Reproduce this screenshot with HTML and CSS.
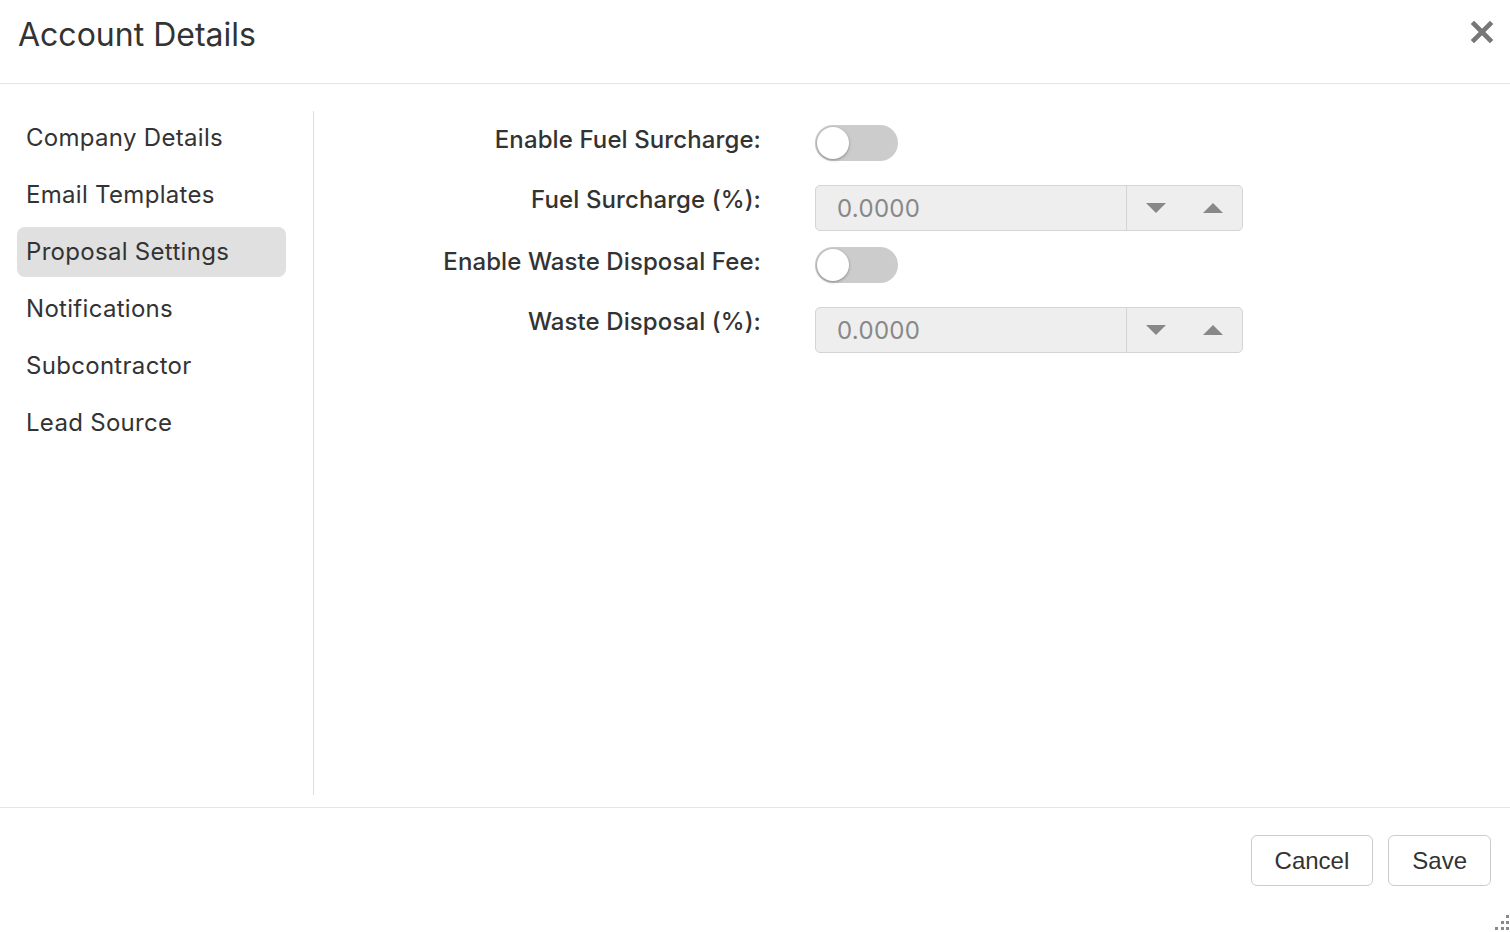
FILE: index.html
```html
<!DOCTYPE html>
<html>
<head>
    <title>Account Details</title>
    <link rel="stylesheet" href="styles.css">
</head>
<body>
    <div class="modal">
        <div class="modal-header">
            <h1>Account Details</h1>
            <button class="close-btn" title="Close">
                <svg width="24" height="24" viewBox="0 0 24 24">
                    <path d="M4 4 L20 20 M20 4 L4 20" stroke="#777" stroke-width="4.6" stroke-linecap="square" fill="none"/>
                </svg>
            </button>
        </div>

        <div class="modal-body">
            <ul class="side-nav">
                <li>Company Details</li>
                <li>Email Templates</li>
                <li class="active">Proposal Settings</li>
                <li>Notifications</li>
                <li>Subcontractor</li>
                <li>Lead Source</li>
            </ul>

            <div class="settings">
                <div class="field field-toggle">
                    <label>Enable Fuel Surcharge:</label>
                    <span class="switch"><span class="knob"></span></span>
                </div>
                <div class="field">
                    <label>Fuel Surcharge (%):</label>
                    <div class="spinner">
                        <input type="text" value="0.0000" disabled>
                        <button class="spin"><span class="arrow-down"></span></button>
                        <button class="spin"><span class="arrow-up"></span></button>
                    </div>
                </div>
                <div class="field field-toggle">
                    <label>Enable Waste Disposal Fee:</label>
                    <span class="switch"><span class="knob"></span></span>
                </div>
                <div class="field">
                    <label>Waste Disposal (%):</label>
                    <div class="spinner">
                        <input type="text" value="0.0000" disabled>
                        <button class="spin"><span class="arrow-down"></span></button>
                        <button class="spin"><span class="arrow-up"></span></button>
                    </div>
                </div>
            </div>
        </div>

        <div class="modal-footer">
            <button class="btn">Cancel</button>
            <button class="btn">Save</button>
            <svg class="grip" width="17" height="17" viewBox="0 0 17 17">
                <g fill="#8a8a8a">
                    <rect x="13" y="1" width="3" height="3"/>
                    <rect x="8" y="7" width="3" height="3"/>
                    <rect x="13" y="7" width="3" height="3"/>
                    <rect x="2" y="13" width="3" height="3"/>
                    <rect x="8" y="13" width="3" height="3"/>
                    <rect x="13" y="13" width="3" height="3"/>
                </g>
            </svg>
        </div>
    </div>
</body>
</html>
```

FILE: styles.css
```css
* {
    box-sizing: border-box;
}
body {
    margin: 0;
    font-family: Inter, "Noto Sans", sans-serif;
    color: #333;
    background: white;
}
.modal {
    display: flex;
    flex-direction: column;
    height: 100vh;
    position: relative;
}
.modal-header {
    height: 84px;
    padding: 15px 18px 0;
    border-bottom: 1px solid #e5e5e5;
    display: flex;
    justify-content: space-between;
    align-items: flex-start;
}
.modal-header h1 {
    margin: 0;
    font-size: 32px;
    font-weight: 400;
}
.close-btn {
    background: none;
    border: none;
    padding: 0;
    margin: 5px -2px 0 0;
    cursor: pointer;
}
.modal-body {
    flex: 1;
    display: flex;
    padding: 27px 0 12px;
}
.side-nav {
    list-style: none;
    margin: 0;
    padding: 2px 27px 0 17px;
    width: 314px;
    border-right: 1px solid #ddd;
    display: flex;
    flex-direction: column;
    gap: 7px;
}
.side-nav li {
    height: 50px;
    line-height: 50px;
    padding: 0 9px;
    font-size: 24px;
    letter-spacing: 0.3px;
    border-radius: 8px;
    cursor: pointer;
}
.side-nav li.active {
    background: #e0e0e0;
}
.settings {
    padding: 14px 0 0 16px;
}
.field {
    display: grid;
    grid-template-columns: 431px 428px;
    column-gap: 54px;
    align-items: start;
    margin-bottom: 16px;
}
.field-toggle {
    min-height: 44px;
}
.field label {
    text-align: right;
    font-size: 24px;
    font-weight: 500;
    letter-spacing: 0.1px;
    line-height: 30px;
}
.switch {
    display: block;
    width: 83px;
    height: 36px;
    border-radius: 18px;
    background: #ccc;
    position: relative;
}
.knob {
    position: absolute;
    left: 2px;
    top: 2px;
    width: 32px;
    height: 32px;
    border-radius: 50%;
    background: white;
    box-shadow: 0 1px 3px rgba(0,0,0,0.35);
}
.spinner {
    display: flex;
    height: 46px;
    border: 1px solid #d4d4d4;
    border-radius: 5px;
    background: #eee;
    overflow: hidden;
}
.spinner input {
    width: 311px;
    border: none;
    border-right: 1px solid #d4d4d4;
    background: transparent;
    padding: 0 0 0 21px;
    font-family: Inter, "Noto Sans", sans-serif;
    font-size: 24px;
    letter-spacing: 0.3px;
    color: #888;
}
.spin {
    flex: 1;
    background: transparent;
    border: none;
    display: flex;
    align-items: center;
    justify-content: center;
    padding: 0;
}
.arrow-down {
    border-left: 10px solid transparent;
    border-right: 10px solid transparent;
    border-top: 10px solid #888;
}
.arrow-up {
    border-left: 10px solid transparent;
    border-right: 10px solid transparent;
    border-bottom: 10px solid #888;
}
.modal-footer {
    height: 125px;
    border-top: 1px solid #e5e5e5;
    padding: 27px 19px 0;
    display: flex;
    justify-content: flex-end;
    align-items: flex-start;
    gap: 15px;
}
.btn {
    height: 51px;
    padding: 0 23px;
    background: white;
    border: 1px solid #ccc;
    border-radius: 6px;
    font-family: "Liberation Sans", Arial, sans-serif;
    font-size: 24px;
    color: #333;
    cursor: pointer;
}
.grip {
    position: absolute;
    right: 0;
    bottom: 1px;
}
```
